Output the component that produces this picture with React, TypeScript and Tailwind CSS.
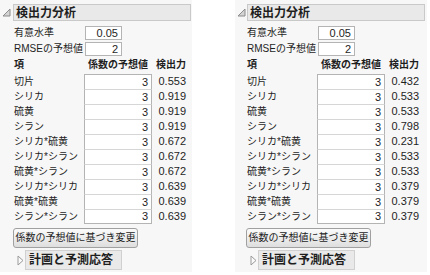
import React from 'react'

const font = { fontFamily: '"Liberation Sans", "Noto Sans CJK JP", sans-serif' }

const terms = ['切片', 'シリカ', '硫黄', 'シラン', 'シリカ*硫黄', 'シリカ*シラン', '硫黄*シラン', 'シリカ*シリカ', '硫黄*硫黄', 'シラン*シラン']

function OpenTriangle() {
  return (
    <svg width="9" height="9" viewBox="0 0 9 9" className="shrink-0">
      <path d="M8 1 L8 8 L1 8 Z" fill="#d4d4d4" stroke="#8c8c8c" strokeWidth="1" strokeLinejoin="round" />
    </svg>
  )
}

function ClosedTriangle() {
  return (
    <svg width="7" height="11" viewBox="0 0 7 11" className="shrink-0">
      <path d="M1 1 L6 5.5 L1 10 Z" fill="#fafafa" stroke="#9a9a9a" strokeWidth="1" strokeLinejoin="round" />
    </svg>
  )
}

function Panel({ powers, shift }: { powers: string[]; shift: boolean }) {
  return (
    <div className="w-[192px] h-[272px] bg-[#f7f7f7] text-[#1e1e1e]" style={font}>
      {/* Header */}
      <div className="flex items-end pt-[4px] pl-[2px]">
        <div className="mb-[4px]"><OpenTriangle /></div>
        <div className={`${shift ? 'ml-[1px]' : 'ml-[2px]'} w-[178px] h-[17px] bg-[#e9e9e9] border border-[#c9c9c9] flex items-center pl-[2px] text-[12px] font-bold leading-none`}>
          検出力分析
        </div>
      </div>

      <div className={`${shift ? 'pl-[12px]' : 'pl-[14px]'} pt-[5px]`}>
        {/* params */}
        <div className="flex items-center h-[14px]">
          <div className="w-[71px] text-[10px] leading-none">有意水準</div>
          <div className="w-[37px] h-[14px] bg-white border border-[#b4b4b4] text-[11px] leading-none flex items-center justify-end pr-[3px]">0.05</div>
        </div>
        <div className="flex items-center h-[14px] mt-[2px]">
          <div className="w-[71px] text-[10px] leading-none">RMSEの予想値</div>
          <div className="w-[37px] h-[14px] bg-white border border-[#b4b4b4] text-[11px] leading-none flex items-center justify-end pr-[3px]">2</div>
        </div>

        {/* table header */}
        <div className="flex items-center h-[18px] pb-[1px] text-[10px] font-bold leading-none">
          <div className="w-[70px]">項</div>
          <div className="w-[68px] text-right pr-[4px]">係数の予想値</div>
          <div className="w-[34px] text-right">検出力</div>
        </div>

        {/* rows */}
        <div className="flex flex-col">
          {terms.map((t, i) => (
            <div key={t} className="flex items-center h-[15px]">
              <div className="w-[70px] text-[10px] leading-none whitespace-nowrap">{t}</div>
              <div className={`w-[68px] h-[15px] bg-white border-x border-[#b4b4b4] ${i === 0 ? 'border-t' : 'border-t border-t-[#d6d6d6]'} ${i === terms.length - 1 ? 'border-b' : ''} flex items-center justify-end pr-[3px] text-[11px] leading-none`}>3</div>
              <div className="w-[34px] text-right text-[11px] leading-none">{powers[i]}</div>
            </div>
          ))}
        </div>

        {/* button */}
        <div className="mt-[4px] -ml-[1px] w-[125px] h-[20px] rounded-[3px] border border-[#a0a0a0] bg-gradient-to-b from-[#fbfbfb] to-[#dedede] flex items-center justify-center text-[10px] leading-none whitespace-nowrap">
          係数の予想値に基づき変更
        </div>

        {/* collapsed outline */}
        <div className="flex items-center mt-[2px] ml-[3px]">
          <ClosedTriangle />
          <div className="ml-[1px] w-[97px] h-[20px] bg-[#e9e9e9] border border-[#d0d0d0] flex items-center pl-[3px] text-[12px] font-bold leading-none">
            計画と予測応答
          </div>
        </div>
      </div>
    </div>
  )
}

export default function App() {
  return (
    <div className="w-[430px] h-[275px] bg-white flex">
      <Panel powers={['0.553', '0.919', '0.919', '0.919', '0.672', '0.672', '0.672', '0.639', '0.639', '0.639']} shift={false} />
      <div className="ml-[43px]">
        <Panel powers={['0.432', '0.533', '0.533', '0.798', '0.231', '0.533', '0.533', '0.379', '0.379', '0.379']} shift={true} />
      </div>
    </div>
  )
}
